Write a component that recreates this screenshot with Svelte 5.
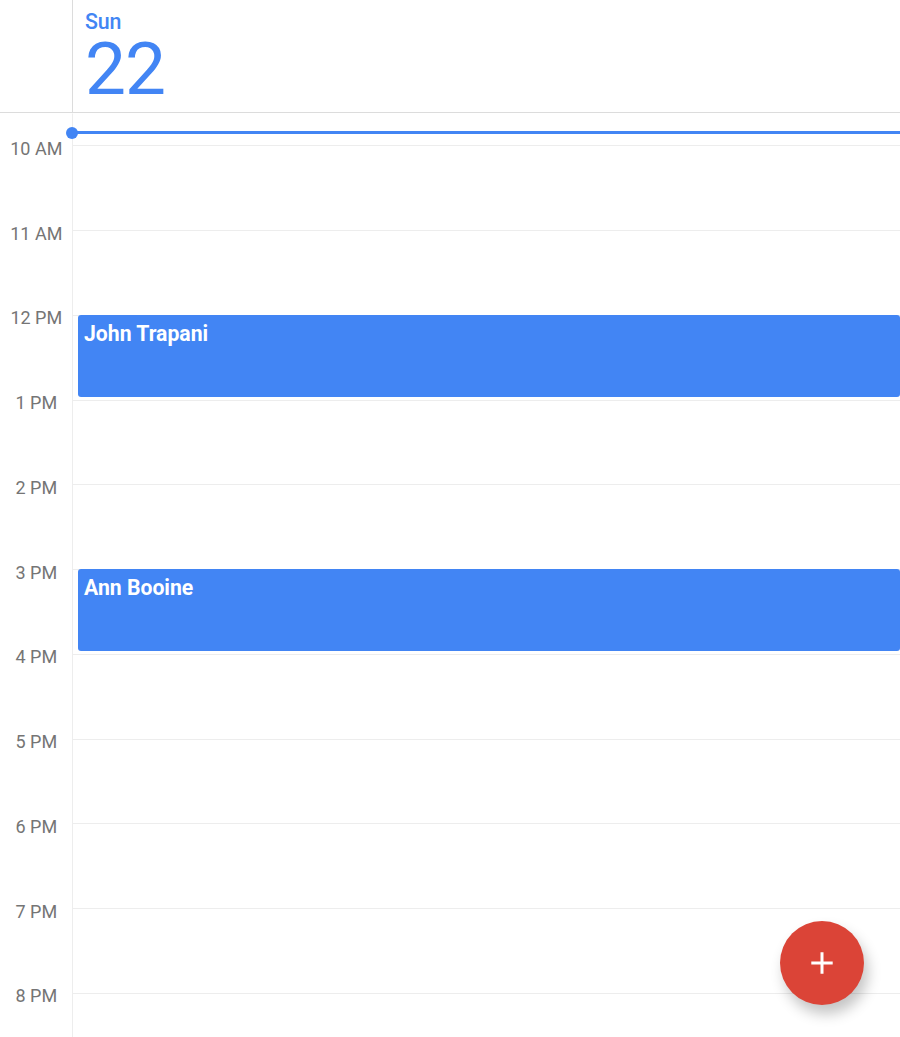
<script>
  const hours = ['10 AM', '11 AM', '12 PM', '1 PM', '2 PM', '3 PM', '4 PM', '5 PM', '6 PM', '7 PM', '8 PM'];
  const events = { '12 PM': 'John Trapani', '3 PM': 'Ann Booine' };
</script>

<main>
  <header>
    <div class="gutter"></div>
    <div class="date">
      <span class="day">Sun</span>
      <span class="num">22</span>
    </div>
  </header>
  <section class="schedule">
    <div class="row lead"><div class="label"></div><div class="slot"></div></div>
    {#each hours as hour}
      <div class="row">
        <div class="label">{hour}</div>
        <div class="slot">
          {#if events[hour]}<article>{events[hour]}</article>{/if}
        </div>
      </div>
    {/each}
    <div class="now"></div>
  </section>
  <button aria-label="Add event">
    <svg width="24" height="24" viewBox="0 0 24 24"><path d="M12 1.3v21.4M1.3 12h21.4" stroke="#fff" stroke-width="3" /></svg>
  </button>
</main>

<style>
  main { position: relative; height: 1037px; overflow: hidden; background: #fff; font-family: Roboto, sans-serif; display: flex; flex-direction: column; }
  header { height: 113px; flex: none; box-sizing: border-box; border-bottom: 1px solid #dcdcdc; display: flex; }
  .gutter { width: 73px; box-sizing: border-box; border-right: 1px solid #dcdcdc; }
  .date { color: #4285f4; padding: 9px 0 0 12px; display: flex; flex-direction: column; }
  .day { font-size: 21.4px; line-height: 25px; font-weight: 500; letter-spacing: -0.2px; }
  .num { font-size: 73px; line-height: 71px; letter-spacing: -1px; }
  .schedule { position: relative; flex: 1; }
  .row { height: 84.75px; display: flex; }
  .lead { height: 32.4px; }
  .label { width: 72.6px; flex: none; margin: -7.6px -0.6px 0 0; color: #757575; font-size: 18px; line-height: 21px; text-align: center; }
  .slot { flex: 1; border-left: 1px solid #ededed; border-top: 1px solid #ededed; padding-left: 5px; }
  .lead .slot { border-top-color: transparent; }
  article { height: 82px; margin-top: -1px; box-sizing: border-box; border-radius: 3px; background: #4285f4; color: #fff; font-weight: 700; font-size: 21.2px; line-height: 25px; padding: 6px; }
  .now { position: absolute; left: 72px; right: 0; top: 18px; height: 3px; background: #4285f4; }
  .now::before { content: ''; position: absolute; left: -6px; top: -4.5px; width: 12px; height: 12px; border-radius: 50%; background: #4285f4; }
  button { position: absolute; left: 780px; top: 921px; width: 84px; height: 84px; padding: 0; border: 0; border-radius: 50%; background: #db4437; display: grid; place-items: center; box-shadow: 4px 9px 14px #0000003c; }
</style>
